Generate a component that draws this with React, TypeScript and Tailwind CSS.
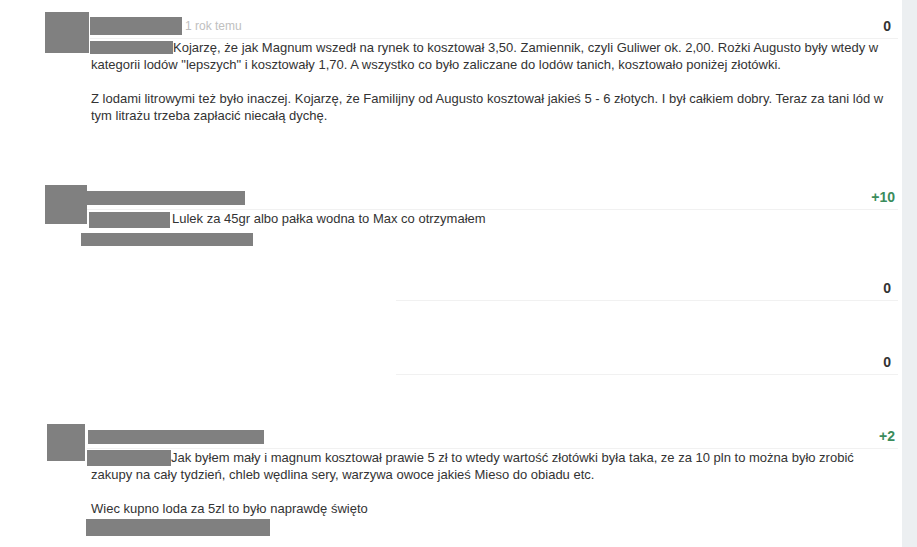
import React from "react";

const Bar = ({ className = "" }: { className?: string }) => (
  <div className={`bg-[#808080] ${className}`} />
);

export default function App() {
  return (
    <div className="flex min-h-[547px] w-[917px] bg-white font-['Liberation_Sans',Arial,sans-serif] text-[13px] leading-[17px] text-[#333]">
      <main className="flex-1 pt-[12px]">
        {/* Comment 1 */}
        <div className="flex pl-[45px]">
          <Bar className="h-[41px] w-[44px] shrink-0" />
          <div className="flex-1 pl-[1px] pr-[4px]">
            <div className="flex h-[27px] items-start border-b border-[#f1f1f1]">
              <Bar className="mt-[5px] h-[18px] w-[92px]" />
              <span className="ml-[3px] mt-[7px] text-[12px] leading-[14px] text-[#c0c0c0]">1 rok temu</span>
              <span className="ml-auto mt-[6px] pr-[7px] text-[14px] font-bold leading-[16px] text-[#333]">0</span>
            </div>
            <p className="pl-[1px] pr-[3px]">
              <span className="-ml-[1px] inline-block h-[13px] w-[83px] bg-[#808080] align-[-2px]" />
              Kojarzę, że jak Magnum wszedł na rynek to kosztował 3,50. Zamiennik, czyli Guliwer ok. 2,00. Rożki Augusto były wtedy w kategorii lodów "lepszych" i kosztowały 1,70. A wszystko co było zaliczane do lodów tanich, kosztowało poniżej złotówki.
              <br />
              <br />
              Z lodami litrowymi też było inaczej. Kojarzę, że Familijny od Augusto kosztował jakieś 5 - 6 złotych. I był całkiem dobry. Teraz za tani lód w tym litrażu trzeba zapłacić niecałą dychę.
            </p>
          </div>
        </div>

        {/* Comment 2 */}
        <div className="mt-[61px] flex pl-[45px]">
          <Bar className="h-[39px] w-[42px] shrink-0" />
          <div className="flex-1 pr-[4px]">
            <div className="flex h-[25px] items-start border-b border-[#f1f1f1]">
              <Bar className="mt-[6px] h-[14px] w-[158px]" />
              <span className="ml-auto mt-[4px] pr-[3px] text-[14px] font-bold leading-[16px] text-[#3b8c5c]">+10</span>
            </div>
            <div className="flex items-start pl-[2px]">
              <Bar className="mt-[2px] h-[16px] w-[81px] shrink-0" />
              <span className="ml-[2px]">Lulek za 45gr albo pałka wodna to Max co otrzymałem</span>
            </div>
            <Bar className="-ml-[6px] mt-[5px] h-[13px] w-[172px]" />
          </div>
        </div>

        {/* Hidden replies */}
        <div className="ml-[396px] mr-[4px] mt-[30px] flex h-[25px] items-start justify-end border-b border-[#f1f1f1]">
          <span className="mt-[4px] pr-[7px] text-[14px] font-bold leading-[16px] text-[#333]">0</span>
        </div>
        <div className="ml-[396px] mr-[4px] mt-[49px] flex h-[25px] items-start justify-end border-b border-[#f1f1f1]">
          <span className="mt-[4px] pr-[7px] text-[14px] font-bold leading-[16px] text-[#333]">0</span>
        </div>

        {/* Comment 3 */}
        <div className="mt-[49px] flex pl-[47px]">
          <Bar className="h-[37px] w-[38px] shrink-0" />
          <div className="flex-1 pl-[2px] pr-[4px]">
            <div className="flex h-[25px] items-start border-b border-[#f1f1f1]">
              <Bar className="ml-[1px] mt-[6px] h-[14px] w-[176px]" />
              <span className="ml-auto mt-[4px] pr-[3px] text-[14px] font-bold leading-[16px] text-[#3b8c5c]">+2</span>
            </div>
            <p className="pl-[4px] pr-[3px]">
              <span className="-ml-[4px] inline-block h-[16px] w-[84px] bg-[#808080] align-[-4px]" />
              Jak byłem mały i magnum kosztował prawie 5 zł to wtedy wartość złotówki była taka, ze za 10 pln to można było zrobić zakupy na cały tydzień, chleb wędlina sery, warzywa owoce jakieś Mieso do obiadu etc.
              <br />
              <br />
              Wiec kupno loda za 5zl to było naprawdę święto
            </p>
            <Bar className="-ml-[1px] mt-[2px] h-[17px] w-[184px]" />
          </div>
        </div>
      </main>
      <aside className="w-[15px] shrink-0 bg-[#eceff1]" />
    </div>
  );
}
